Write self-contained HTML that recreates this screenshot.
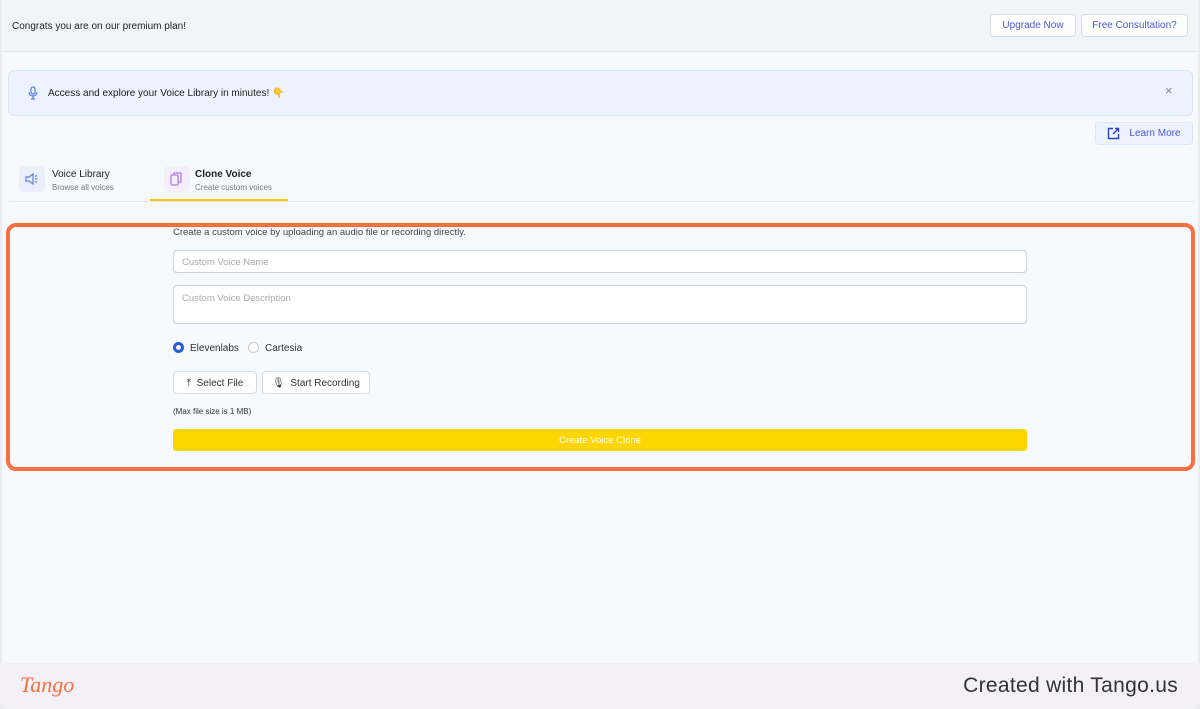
<!DOCTYPE html>
<html><head><style>
*{box-sizing:border-box;margin:0;padding:0}
body{width:1200px;height:709px;background:#e9ebf0;font-family:"Liberation Sans",sans-serif;overflow:hidden;position:relative}
.app{position:absolute;left:2px;top:0;width:1196px;height:663px;background:#f6f9fd;border-radius:0 10px 0 0}
.top{position:absolute;left:0;top:0;width:1196px;height:52px;background:#f1f4f9;border-bottom:1px solid #dbe4f7}
.btn{position:absolute;background:#fff;border:1px solid #d8dce3;border-radius:4px;color:#4a56d6;font-size:10px;display:flex;align-items:center;justify-content:center}
.banner{position:absolute;left:6px;top:70px;width:1185px;height:46px;background:#edf3fd;border:1px solid #d9e6fa;border-radius:6px}
.t{position:absolute;font-size:10px;color:#222}
.s{position:absolute;font-size:8px;color:#777}
.field{position:absolute;left:171px;width:854px;background:#fff;border:1px solid #cfd3da;border-radius:4px;font-size:9.5px;color:#aaa;padding:0 8px}
.footer{position:absolute;left:0;top:663px;width:1200px;height:46px;background:#f3f1f7;border-radius:0 0 10px 10px}
</style></head><body>
<div class="app">
<div class="top"><div class="t" style="left:10px;top:21px;font-size:10px">Congrats you are on our premium plan!</div></div>
<div class="btn" style="left:988px;top:14px;width:86px;height:23px">Upgrade Now</div>
<div class="btn" style="left:1079px;top:14px;width:107px;height:23px">Free Consultation?</div>
<div class="banner">
<svg style="position:absolute;left:19px;top:15px" width="10" height="14" viewBox="0 0 10 14" fill="none" stroke="#5a7fe0" stroke-width="1.2"><rect x="3" y="1" width="4" height="7" rx="2"/><path d="M1 6a4 4 0 0 0 8 0M5 10v3M3 13h4"/></svg>
<div class="t" style="left:39px;top:17px">Access and explore your Voice Library in minutes! <span style="color:#f0a020">👇</span></div>
<div class="t" style="left:1156px;top:12px;color:#888;font-size:13px">×</div>
</div>
<div class="btn" style="left:1093px;top:122px;width:98px;height:23px;background:#edf3fd;border-color:#d9e6fa;color:#4a56d6">
<svg width="13" height="13" viewBox="0 0 13 13" fill="none" stroke="#2746c8" stroke-width="1.4" style="margin-right:9px"><path d="M6 1.5H1.5v10h10V7M8 1.5h3.5V5M11.5 1.5L6 7"/></svg>Learn More</div>
<div style="position:absolute;left:17px;top:166px;width:26px;height:26px;background:#eaf0fb;border-radius:5px"></div>
<svg style="position:absolute;left:23px;top:172px" width="14" height="14" viewBox="0 0 14 14" fill="none" stroke="#5a7fe0" stroke-width="1.2"><path d="M1 5h3l4-3v10L4 9H1zM10 4.5l2-1M10 7h2.5M10 9.5l2 1"/></svg>
<div class="t" style="left:50px;top:169px">Voice Library</div>
<div class="s" style="left:50px;top:183px">Browse all voices</div>
<div style="position:absolute;left:162px;top:166px;width:26px;height:26px;background:#f5effd;border-radius:5px"></div>
<svg style="position:absolute;left:168px;top:172px" width="12" height="14" viewBox="0 0 12 14" fill="none" stroke="#b07de8" stroke-width="1.3"><rect x="1" y="3" width="7" height="10" rx="1"/><path d="M4 3V1h7v9H8"/></svg>
<div class="t" style="left:193px;top:169px;font-weight:bold">Clone Voice</div>
<div class="s" style="left:193px;top:183px">Create custom voices</div>
<div style="position:absolute;left:7px;top:201px;width:1185px;height:1px;background:#e6e9ef"></div>
<div style="position:absolute;left:148px;top:199px;width:138px;height:2px;background:#f5c800"></div>
<div style="position:absolute;left:4px;top:223px;width:1189px;height:248px;border:4px solid #fb7040;border-radius:10px"></div>
<div class="t" style="left:171px;top:227px;font-size:9.5px;color:#444">Create a custom voice by uploading an audio file or recording directly.</div>
<div class="field" style="top:250px;height:23px;line-height:23px">Custom Voice Name</div>
<div class="field" style="top:285px;height:39px;padding-top:7px">Custom Voice Description</div>
<div style="position:absolute;left:171px;top:342px;width:11px;height:11px;border:3px solid #2a5bd7;border-radius:50%;background:#fff"></div>
<div class="t" style="left:188px;top:343px;font-size:10px;color:#333">Elevenlabs</div>
<div style="position:absolute;left:246px;top:342px;width:11px;height:11px;border:1px solid #ccc;border-radius:50%;background:#fff"></div>
<div class="t" style="left:263px;top:343px;font-size:10px;color:#333">Cartesia</div>
<div class="btn" style="left:171px;top:371px;width:84px;height:23px;color:#333;font-size:10px;padding-top:1px">⤒&nbsp;&nbsp;Select File</div>
<div class="btn" style="left:260px;top:371px;width:108px;height:23px;color:#333;font-size:10px;padding-top:1px">🎙&#xFE0E;&nbsp;&nbsp;Start Recording</div>
<div class="t" style="left:171px;top:407px;font-size:8px;color:#333">(Max file size is 1 MB)</div>
<div style="position:absolute;left:171px;top:429px;width:854px;height:22px;background:#fdd600;border-radius:3px;color:#fff;font-size:9.5px;text-align:center;line-height:24px">Create Voice Clone</div>
</div>
<div class="footer">
<div style="position:absolute;left:20px;top:9px;font-family:'Liberation Serif',serif;font-style:italic;font-size:22px;color:#fb7040">Tango</div>
<div style="position:absolute;right:22px;top:11px;font-size:21px;color:#333;letter-spacing:0.3px">Created with Tango.us</div>
</div>
</body></html>
